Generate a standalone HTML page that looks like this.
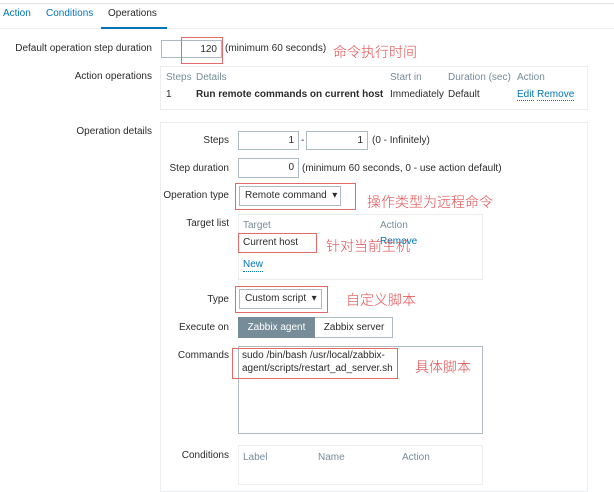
<!DOCTYPE html>
<html><head><meta charset="utf-8"><style>
*{margin:0;padding:0;box-sizing:border-box}
body{width:614px;height:479px;background:#fff;font-family:"Liberation Sans",Arial,sans-serif;font-size:10px;color:#2b2b2b;position:relative;overflow:hidden}
.a{position:absolute;white-space:nowrap;line-height:12px}
.lbl{position:absolute;right:385px;white-space:nowrap;line-height:12px}
.in{position:absolute;border:1px solid #acbbc2;background:#fff;text-align:right;padding-right:4px;line-height:17px}
.box{position:absolute;border:1px solid #ebeef0;background:#fff}
.red{position:absolute;border:1px solid #e46a6a}
.cn{position:absolute;color:#e24c4c;font-family:"Noto Sans CJK SC",sans-serif;font-weight:300;font-size:14px;white-space:nowrap;line-height:16px}
.g{color:#768d99}
.lnk{color:#0275b8;border-bottom:1px dotted #0275b8}
.sel{position:absolute;border:1px solid #acbbc2;background:#fff;padding-left:5px;line-height:18px}
</style></head><body>
<div style="position:absolute;left:0;top:3px;width:614px;height:1px;background:#dfe4e7"></div>
<div class="a" style="left:3px;top:8px;color:#0275b8">Action</div>
<div class="a" style="left:46px;top:8px;color:#0275b8">Conditions</div>
<div class="a" style="left:108px;top:8px">Operations</div>
<div style="position:absolute;left:0;top:28px;width:614px;height:1px;background:#ebeef0"></div>
<div style="position:absolute;left:101px;top:27px;width:66px;height:2px;background:#0275b8"></div>

<div class="lbl" style="top:43px;right:462px">Default operation step duration</div>
<div class="in" style="left:161px;top:40px;width:61px;height:18px">120</div>
<div class="red" style="left:181px;top:37px;width:42px;height:27px"></div>
<div class="a" style="left:225px;top:43px">(minimum 60 seconds)</div>
<div class="cn" style="left:333px;top:44px">命令执行时间</div>

<div class="lbl" style="top:71px;right:462px">Action operations</div>
<div class="box" style="left:160px;top:66px;width:428px;height:44px"></div>
<div class="a g" style="left:166px;top:72px">Steps</div>
<div class="a g" style="left:196px;top:72px">Details</div>
<div class="a g" style="left:390px;top:72px">Start in</div>
<div class="a g" style="left:448px;top:72px">Duration (sec)</div>
<div class="a g" style="left:517px;top:72px">Action</div>
<div class="a" style="left:166px;top:89px">1</div>
<div class="a" style="left:196px;top:89px;font-weight:bold">Run remote commands on current host</div>
<div class="a" style="left:390px;top:89px">Immediately</div>
<div class="a" style="left:448px;top:89px">Default</div>
<div class="a" style="left:517px;top:89px"><span class="lnk">Edit</span> <span class="lnk">Remove</span></div>

<div class="lbl" style="top:126px;right:462px">Operation details</div>
<div class="box" style="left:160px;top:122px;width:428px;height:370px"></div>

<div class="lbl" style="top:135px">Steps</div>
<div class="in" style="left:238px;top:131px;width:61px;height:19px">1</div>
<div class="a" style="left:301px;top:135px">-</div>
<div class="in" style="left:306px;top:131px;width:62px;height:19px">1</div>
<div class="a" style="left:372px;top:135px">(0 - Infinitely)</div>

<div class="lbl" style="top:163px">Step duration</div>
<div class="in" style="left:238px;top:158px;width:61px;height:20px">0</div>
<div class="a" style="left:302px;top:163px">(minimum 60 seconds, 0 - use action default)</div>

<div class="lbl" style="top:190px">Operation type</div>
<div class="sel" style="left:239px;top:186px;width:102px;height:20px">Remote command &nbsp;▾</div>
<div class="red" style="left:235px;top:183px;width:121px;height:27px"></div>
<div class="cn" style="left:367px;top:194px">操作类型为远程命令</div>

<div class="lbl" style="top:218px">Target list</div>
<div class="box" style="left:238px;top:214px;width:245px;height:66px"></div>
<div class="a g" style="left:243px;top:220px">Target</div>
<div class="a g" style="left:380px;top:220px">Action</div>
<div class="a" style="left:243px;top:237px">Current host</div>
<div class="a" style="left:380px;top:236px;color:#0275b8">Remove</div>
<div class="red" style="left:238px;top:233px;width:79px;height:20px"></div>
<div class="cn" style="left:326px;top:238px">针对当前主机</div>
<div class="a lnk" style="left:243px;top:259px">New</div>

<div class="lbl" style="top:294px">Type</div>
<div class="sel" style="left:239px;top:289px;width:83px;height:20px">Custom script &nbsp;▾</div>
<div class="red" style="left:235px;top:286px;width:93px;height:27px"></div>
<div class="cn" style="left:346px;top:292px">自定义脚本</div>

<div class="lbl" style="top:322px">Execute on</div>
<div style="position:absolute;left:238px;top:317px;width:155px;height:21px;border:1px solid #acbbc2"></div>
<div class="a" style="left:238px;top:317px;width:77px;height:21px;background:#768d99;color:#fff;line-height:21px;text-align:center">Zabbix agent</div>
<div class="a" style="left:315px;top:317px;width:78px;line-height:21px;text-align:center">Zabbix server</div>

<div class="lbl" style="top:350px">Commands</div>
<div style="position:absolute;left:238px;top:346px;width:245px;height:88px;border:1px solid #acbbc2"></div>
<div class="a" style="left:242px;top:349px;line-height:13px">sudo /bin/bash /usr/local/zabbix-<br>agent/scripts/restart_ad_server.sh</div>
<div class="red" style="left:232px;top:348px;width:166px;height:31px"></div>
<div class="cn" style="left:415px;top:359px">具体脚本</div>

<div class="lbl" style="top:450px">Conditions</div>
<div class="box" style="left:238px;top:445px;width:245px;height:40px"></div>
<div class="a g" style="left:243px;top:452px">Label</div>
<div class="a g" style="left:318px;top:452px">Name</div>
<div class="a g" style="left:402px;top:452px">Action</div>
</body></html>
